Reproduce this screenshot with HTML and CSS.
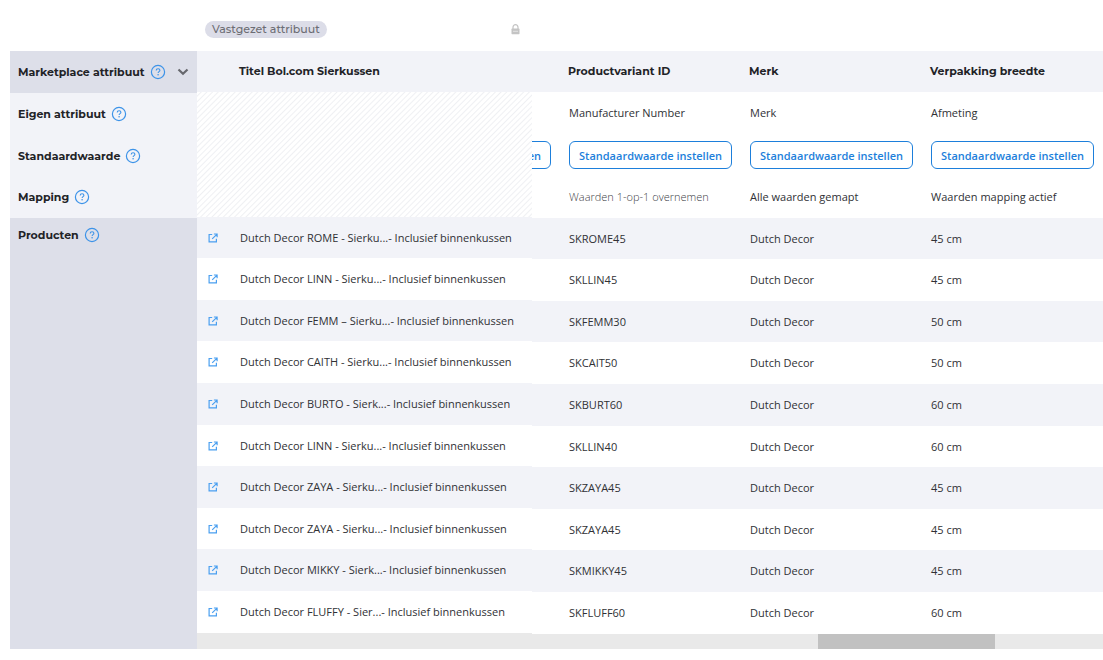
FILE: index.html
```html
<!DOCTYPE html>
<html lang="nl">
<head>
<meta charset="utf-8">
<title>Marketplace attributen</title>
<link rel="stylesheet" href="styles.css">
</head>
<body>
<svg class="sprite" aria-hidden="true">
  <symbol id="help" viewBox="0 0 16 16"><circle cx="8" cy="8" r="6.6" fill="none" stroke="currentColor" stroke-width="1.2"/><path d="M6.2 6.5c0-1.1.8-1.8 1.9-1.8s1.8.7 1.8 1.6c0 1.3-1.8 1.4-1.8 2.7" fill="none" stroke="currentColor" stroke-width="1.1"/><circle cx="8.1" cy="10.8" r=".8" fill="currentColor"/></symbol>
  <symbol id="open" viewBox="0 0 10 10"><path d="M4.2 1.5H1.1v7.4h7.3V5.8M5.9 1h3.2v3.2M8.8 1.3 4.2 5.9" fill="none" stroke="currentColor" stroke-width="1.2"/></symbol>
</svg>
<header class="topbar">
  <span class="pill">Vastgezet attribuut</span>
  <button class="icon-button lock" aria-label="Vergrendeld"><svg width="9" height="11" viewBox="0 0 9 11"><path d="M2 5V3.2a2.5 2.5 0 0 1 5 0V5" fill="none" stroke="#c4c4c4" stroke-width="1.2"/><rect x=".5" y="4.6" width="8" height="5.6" rx=".6" fill="#c4c4c4"/><path d="M2 7.3h5" stroke="#e4e4e4"/></svg></button>
</header>
<main class="board">
  <aside class="labels">
    <div class="label label-main">Marketplace attribuut<button class="icon-button help" aria-label="Uitleg marketplace attribuut"><svg><use href="#help"/></svg></button><button class="icon-button chevron" aria-label="Inklappen"><svg width="12" height="8" viewBox="0 0 12 8"><path d="m1.5 1.5 4.5 4.3 4.5-4.3" fill="none" stroke="#66676d" stroke-width="2.2"/></svg></button></div>
    <div class="label">Eigen attribuut<button class="icon-button help" aria-label="Uitleg eigen attribuut"><svg><use href="#help"/></svg></button></div>
    <div class="label label-default">Standaardwaarde<button class="icon-button help" aria-label="Uitleg standaardwaarde"><svg><use href="#help"/></svg></button></div>
    <div class="label">Mapping<button class="icon-button help" aria-label="Uitleg mapping"><svg><use href="#help"/></svg></button></div>
    <div class="label label-products">Producten<button class="icon-button help" aria-label="Uitleg producten"><svg><use href="#help"/></svg></button></div>
  </aside>
  <div class="content">
    <div class="panes">
      <table class="pinned">
        <colgroup><col class="col-link"><col></colgroup>
        <thead>
          <tr><th></th><th scope="col">Titel Bol.com Sierkussen</th></tr>
          <tr class="hatched"><td colspan="2"></td></tr>
        </thead>
        <tbody>
          <tr><td><a href="#" aria-label="Open product"><svg><use href="#open"/></svg></a></td><td>Dutch Decor ROME - Sierku...- Inclusief binnenkussen</td></tr>
          <tr><td><a href="#" aria-label="Open product"><svg><use href="#open"/></svg></a></td><td>Dutch Decor LINN - Sierku...- Inclusief binnenkussen</td></tr>
          <tr><td><a href="#" aria-label="Open product"><svg><use href="#open"/></svg></a></td><td>Dutch Decor FEMM – Sierku...- Inclusief binnenkussen</td></tr>
          <tr><td><a href="#" aria-label="Open product"><svg><use href="#open"/></svg></a></td><td>Dutch Decor CAITH - Sierku...- Inclusief binnenkussen</td></tr>
          <tr><td><a href="#" aria-label="Open product"><svg><use href="#open"/></svg></a></td><td>Dutch Decor BURTO - Sierk...- Inclusief binnenkussen</td></tr>
          <tr><td><a href="#" aria-label="Open product"><svg><use href="#open"/></svg></a></td><td>Dutch Decor LINN - Sierku...- Inclusief binnenkussen</td></tr>
          <tr><td><a href="#" aria-label="Open product"><svg><use href="#open"/></svg></a></td><td>Dutch Decor ZAYA - Sierku...- Inclusief binnenkussen</td></tr>
          <tr><td><a href="#" aria-label="Open product"><svg><use href="#open"/></svg></a></td><td>Dutch Decor ZAYA - Sierku...- Inclusief binnenkussen</td></tr>
          <tr><td><a href="#" aria-label="Open product"><svg><use href="#open"/></svg></a></td><td>Dutch Decor MIKKY - Sierk...- Inclusief binnenkussen</td></tr>
          <tr><td><a href="#" aria-label="Open product"><svg><use href="#open"/></svg></a></td><td>Dutch Decor FLUFFY - Sier...- Inclusief binnenkussen</td></tr>
        </tbody>
      </table>
      <div class="scroller">
        <table class="attributes">
          <colgroup><col class="col-peek"><col><col><col></colgroup>
          <thead>
            <tr><th></th><th scope="col">Productvariant ID</th><th scope="col">Merk</th><th scope="col">Verpakking breedte</th></tr>
            <tr><td></td><td>Manufacturer Number</td><td>Merk</td><td>Afmeting</td></tr>
            <tr><td><div class="peek"><button class="set-default">Standaardwaarde instellen</button></div></td><td><button class="set-default">Standaardwaarde instellen</button></td><td><button class="set-default">Standaardwaarde instellen</button></td><td><button class="set-default">Standaardwaarde instellen</button></td></tr>
            <tr><td></td><td class="muted">Waarden 1-op-1 overnemen</td><td>Alle waarden gemapt</td><td>Waarden mapping actief</td></tr>
          </thead>
          <tbody>
            <tr><td></td><td>SKROME45</td><td>Dutch Decor</td><td>45 cm</td></tr>
            <tr><td></td><td>SKLLIN45</td><td>Dutch Decor</td><td>45 cm</td></tr>
            <tr><td></td><td>SKFEMM30</td><td>Dutch Decor</td><td>50 cm</td></tr>
            <tr><td></td><td>SKCAIT50</td><td>Dutch Decor</td><td>50 cm</td></tr>
            <tr><td></td><td>SKBURT60</td><td>Dutch Decor</td><td>60 cm</td></tr>
            <tr><td></td><td>SKLLIN40</td><td>Dutch Decor</td><td>60 cm</td></tr>
            <tr><td></td><td>SKZAYA45</td><td>Dutch Decor</td><td>45 cm</td></tr>
            <tr><td></td><td>SKZAYA45</td><td>Dutch Decor</td><td>45 cm</td></tr>
            <tr><td></td><td>SKMIKKY45</td><td>Dutch Decor</td><td>45 cm</td></tr>
            <tr><td></td><td>SKFLUFF60</td><td>Dutch Decor</td><td>60 cm</td></tr>
          </tbody>
        </table>
      </div>
    </div>
    <div class="scrollbar"><div class="thumb"></div></div>
  </div>
</main>
</body>
</html>
```
FILE: styles.css
```css
* { box-sizing: border-box; }
body {
  margin: 0;
  background: #fff;
  color: #303135;
  font: 11px/16px "Open Sans", sans-serif;
}
.sprite { display: none; }
.icon-button {
  display: inline-flex;
  padding: 0;
  border: 0;
  background: none;
  cursor: pointer;
}
.topbar {
  display: flex;
  align-items: center;
  justify-content: space-between;
  width: 532px;
  padding: 21px 12px 13px 205px;
}
.pill {
  padding: 0 7px;
  border-radius: 9px;
  background: #dcdde8;
  color: #6c6d74;
  font: 500 11px/17px Montserrat, Inter, sans-serif;
}
.board { display: flex; margin-left: 10px; }
.labels {
  display: flex;
  flex-direction: column;
  flex: 0 0 187px;
  background: #f2f3f8;
}
.label {
  display: flex;
  align-items: center;
  gap: 5px;
  height: 42px;
  padding: 0 8px;
  color: #222327;
  font: 700 11px/16px Montserrat, Inter, sans-serif;
  white-space: nowrap;
}
.label-default { height: 41px; }
.label-main, .label-products { background: #dddfe9; }
.label-products {
  flex: 1;
  align-items: flex-start;
  padding-top: 9px;
}
.help { color: #3d93e8; }
.help svg { width: 16px; height: 16px; }
.chevron { margin-left: auto; }
.content { flex: 1; min-width: 0; }
.panes { display: flex; align-items: flex-start; background: #e9e9e9; }
table { border-collapse: collapse; table-layout: fixed; background: #fff; }
th, td { padding: 0 9px; text-align: left; font-weight: 400; white-space: nowrap; }
th {
  height: 41px;
  padding: 0 8px 2px;
  background: #f2f3f8;
  color: #222327;
  font: 700 11px/16px Montserrat, Inter, sans-serif;
}
thead tr + tr { height: 42px; }
tbody tr { height: 42px; }
tbody tr:nth-child(5n + 1), tbody tr:nth-child(5n + 3) { height: 41px; }
tbody tr:nth-child(odd) { background: #f2f3f8; }
.pinned { flex: 0 0 335px; width: 335px; }
.pinned td + td { padding-right: 0; }
.pinned .hatched { height: 125px; }
.hatched td {
  background: repeating-linear-gradient(135deg, #fff 0 2px, #eff0f3 3px, #fff 4px);
}
.col-link { width: 34px; }
.pinned td:first-child { padding-right: 11px; }
.pinned a { display: flex; justify-content: center; color: #4a9ff0; }
.pinned a svg { flex: none; width: 10px; height: 10px; }
.scroller { flex: 1; min-width: 0; overflow: hidden; }
.attributes { width: 100%; }
.col-peek { width: 28px; }
.attributes td:first-child { padding-left: 0; }
.peek { display: flex; justify-content: flex-end; overflow: hidden; }
.set-default {
  flex: none;
  height: 28px;
  padding: 2px 9px 0;
  border: 1px solid #1d7fdb;
  border-radius: 6px;
  background: #fff;
  color: #1d7fdb;
  font: 600 11px/16px "Open Sans", sans-serif;
}
.attributes .muted { color: #404146; font-weight: 300; }
.scrollbar { height: 15px; padding-left: 621px; background: #e9e9e9; }
.thumb { width: 177px; height: 15px; background: #c1c1c1; }
```
